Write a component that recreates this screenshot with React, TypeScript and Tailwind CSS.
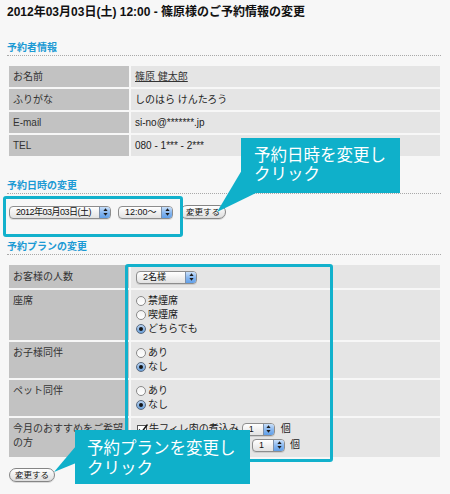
import React from "react";

const SANS = "font-['Liberation_Sans','Noto_Sans_CJK_JP',sans-serif]";

function Arrows() {
  return (
    <svg width="5" height="8" viewBox="0 0 5 8">
      <path d="M2.5 0.3 L4.6 3.1 H0.4Z M2.5 7.7 L4.6 4.9 H0.4Z" fill="#1b1b1b" />
    </svg>
  );
}

function AquaSelect({ label, className, textClass }: { label: string; className: string; textClass?: string }) {
  return (
    <div
      className={`flex h-[13px] items-stretch overflow-hidden rounded-[4px] border border-[#8d8d8d] bg-linear-to-b from-white to-[#e2e2e2] shadow-[0_1px_0_rgba(0,0,0,0.1)] ${className}`}
    >
      <div className={`flex flex-1 items-center overflow-hidden whitespace-nowrap pl-[6px] leading-[11px] text-[#111] ${textClass ?? "text-[9px]"}`}>
        {label}
      </div>
      <div className="flex w-[11px] shrink-0 items-center justify-center border-l border-[#7c90aa] bg-linear-to-b from-[#c9e0fa] via-[#8ab8ef] to-[#5f9fe9]">
        <Arrows />
      </div>
    </div>
  );
}

function AquaButton({ label }: { label: string }) {
  return (
    <div className="flex h-[14px] items-center whitespace-nowrap rounded-full border border-[#858585] bg-linear-to-b from-white to-[#dedede] px-[5px] text-[8.5px] leading-[11px] text-[#111] shadow-[0_1px_0_rgba(0,0,0,0.12)]">
      {label}
    </div>
  );
}

function Radio({ checked, label }: { checked?: boolean; label: string }) {
  return (
    <div className="flex h-[14px] items-center gap-[2px]">
      {checked ? (
        <div className="flex h-[10px] w-[10px] items-center justify-center rounded-full border border-[#5b6b80] bg-linear-to-b from-[#b9d3f2] to-[#6a9fd8]">
          <div className="h-[4px] w-[4px] rounded-full bg-[#151515]" />
        </div>
      ) : (
        <div className="h-[10px] w-[10px] rounded-full border border-[#8a8a8a] bg-linear-to-b from-[#f2f2f2] to-white" />
      )}
      <span className="text-[10px] text-[#222]">{label}</span>
    </div>
  );
}

function Checkbox() {
  return (
    <svg width="11" height="11" viewBox="0 0 11 11">
      <rect x="0.5" y="1.5" width="9" height="9" fill="#fff" stroke="#555" />
      <path d="M2 5.5 L4.3 8.5 L10.5 0.5" fill="none" stroke="#111" strokeWidth="1.4" />
    </svg>
  );
}

function Heading({ text, className }: { text: string; className: string }) {
  return (
    <div className={`border-b border-dotted border-[#a9a9a9] pb-[2px] ${className}`}>
      <div className="text-[10px] font-bold leading-[12px] text-[#1c9ad4] font-['Noto_Sans_CJK_JP',sans-serif]">{text}</div>
    </div>
  );
}

function Row({ label, children, rowClass }: { label: React.ReactNode; children: React.ReactNode; rowClass?: string }) {
  return (
    <>
      <div className={`bg-[#c2c2c2] px-[4px] text-[10px] text-[#333] ${rowClass ?? "py-[4px] leading-[13px]"}`}>{label}</div>
      <div className={`bg-[#e5e5e5] px-[4px] text-[10px] text-[#222] ${rowClass ?? "py-[4px] leading-[13px]"}`}>{children}</div>
    </>
  );
}

export default function App() {
  return (
    <div className={`relative h-[494px] w-[450px] overflow-hidden bg-[#f7f7f7] ${SANS}`}>
      <div className="w-[441px] pl-[7px] pt-[4px]">
        <div className="text-[12px] font-bold leading-[16px] text-[#111]">
          2012年03月03日(土) 12:00 - 篠原様のご予約情報の変更
        </div>

        <Heading text="予約者情報" className="mt-[21px]" />

        <div className="ml-[2px] mt-[10px] grid grid-cols-[120px_309px] gap-[2px]">
          <Row label="お名前">
            <span className="text-[#333] underline">篠原 健太郎</span>
          </Row>
          <Row label="ふりがな">しのはら けんたろう</Row>
          <Row label="E-mail">si-no@*******.jp</Row>
          <Row label="TEL">080 - 1*** - 2***</Row>
        </div>

        <Heading text="予約日時の変更" className="mt-[23px]" />

        <div className="ml-[2px] mt-[11px] flex h-[14px] items-center">
          <AquaSelect
            label="2012年03月03日(土)"
            className="w-[102px]"
            textClass="text-[9px] tracking-[-0.5px]"
          />
          <AquaSelect label="12:00〜" className="ml-[7px] w-[55px]" />
          <div className="ml-[7px]">
            <AquaButton label="変更する" />
          </div>
        </div>

        <Heading text="予約プランの変更" className="mt-[21px]" />

        <div className="ml-[2px] mt-[10px] grid grid-cols-[120px_309px] gap-[2px]">
          <Row label="お客様の人数" rowClass="pt-[5px] pb-[4px] leading-[14px]">
            <div className="flex h-[14px] items-center pl-[1px]">
              <AquaSelect label="2名様" className="w-[61px]" />
            </div>
          </Row>
          <Row label="座席" rowClass="py-[4px] leading-[14px]">
            <div className="pl-[1px]">
              <Radio label="禁煙席" />
              <Radio label="喫煙席" />
              <Radio label="どちらでも" checked />
            </div>
          </Row>
          <Row label="お子様同伴" rowClass="py-[4px] leading-[14px]">
            <div className="pl-[1px]">
              <Radio label="あり" />
              <Radio label="なし" checked />
            </div>
          </Row>
          <Row label="ペット同伴" rowClass="py-[4px] leading-[14px]">
            <div className="pl-[1px]">
              <Radio label="あり" />
              <Radio label="なし" checked />
            </div>
          </Row>
          <Row
            label={<div className="leading-[14px]">今月のおすすめをご希望の方</div>}
            rowClass="pt-[4px] pb-[4px] leading-[16px]"
          >
            <div className="-mt-[1px] pl-[2px]">
              <div className="flex h-[16px] items-center">
                <Checkbox />
                <span className="ml-[1px]">牛フィレ肉の煮込み</span>
                <AquaSelect label="1" className="ml-[3px] w-[33px]" />
                <span className="ml-[6px]">個</span>
              </div>
              <div className="flex h-[16px] items-center">
                <Checkbox />
                <span className="ml-[1px]">季節のデザート盛合せ</span>
                <AquaSelect label="1" className="ml-[3px] w-[33px]" />
                <span className="ml-[5px]">個</span>
              </div>
            </div>
          </Row>
        </div>

        <div className="ml-[2px] mt-[11px] flex">
          <AquaButton label="変更する" />
        </div>
      </div>

      {/* annotation highlight boxes */}
      <div className="absolute left-[3px] top-[196px] h-[41px] w-[180px] rounded-[3px] border-[3px] border-[#12b1cc]" />
      <div className="absolute left-[125px] top-[264px] h-[198px] w-[208px] rounded-[3px] border-[3px] border-[#12b1cc]" />

      {/* callout tails */}
      <svg className="pointer-events-none absolute left-0 top-0" width="450" height="494" viewBox="0 0 450 494">
        <polygon points="242,170 256,193 217,212" fill="#0fb0ca" />
        <polygon points="76,446 76,463 54,472" fill="#0fb0ca" />
      </svg>

      {/* callouts */}
      <div className="absolute left-[241px] top-[138px] h-[55px] w-[159px] bg-[#0fb0ca] pl-[13px] pt-[7px] text-[16.5px] leading-[19px] text-white font-['Noto_Sans_CJK_JP',sans-serif]">
        <div>予約日時を変更し</div>
        <div>クリック</div>
      </div>
      <div className="absolute left-[75px] top-[430px] h-[54px] w-[175px] bg-[#0fb0ca] pl-[12px] pt-[7px] text-[16.5px] leading-[20px] text-white font-['Noto_Sans_CJK_JP',sans-serif]">
        <div>予約プランを変更し</div>
        <div>クリック</div>
      </div>
    </div>
  );
}
